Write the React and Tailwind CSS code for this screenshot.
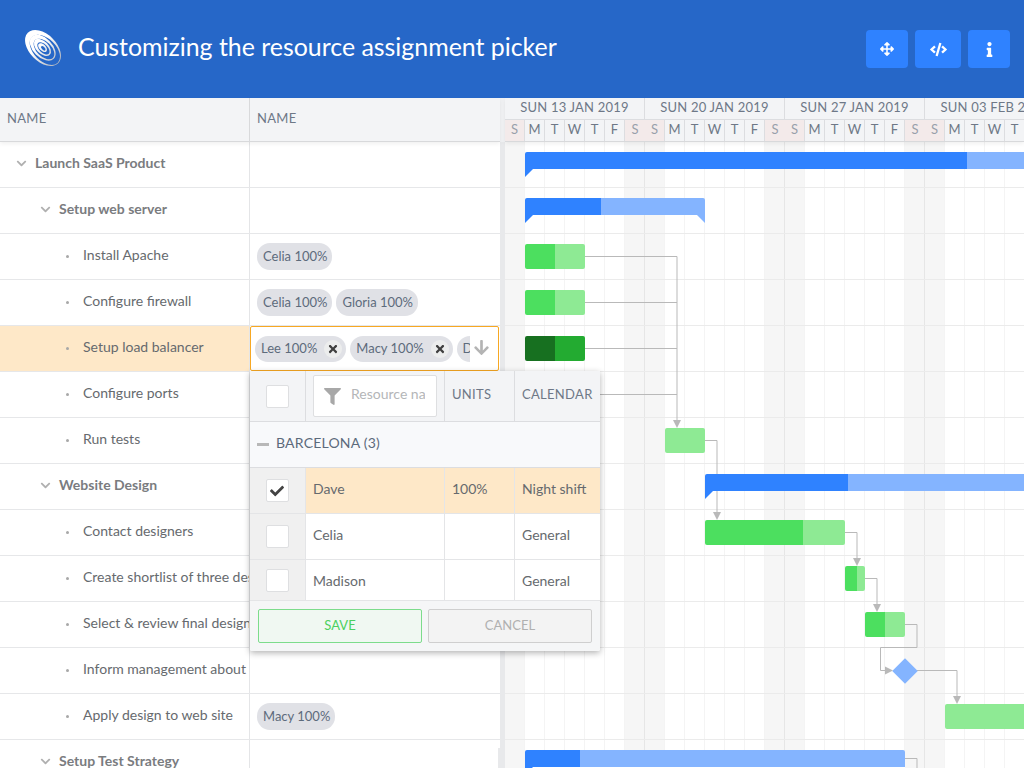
import { FaArrowsAlt, FaCode, FaInfo, FaCheck, FaTimes, FaFilter, FaArrowDown, FaChevronDown } from "react-icons/fa";

const X0 = 505;
const Y0 = 142;

const ROWS = [
  { name: "Launch SaaS Product", level: 0 },
  { name: "Setup web server", level: 1 },
  { name: "Install Apache", level: 2, tags: ["Celia 100%"] },
  { name: "Configure firewall", level: 2, tags: ["Celia 100%", "Gloria 100%"] },
  { name: "Setup load balancer", level: 2, selected: true },
  { name: "Configure ports", level: 2 },
  { name: "Run tests", level: 2 },
  { name: "Website Design", level: 1 },
  { name: "Contact designers", level: 2 },
  { name: "Create shortlist of three designers", level: 2 },
  { name: "Select & review final design", level: 2 },
  { name: "Inform management about final design", level: 2 },
  { name: "Apply design to web site", level: 2, tags: ["Macy 100%"] },
  { name: "Setup Test Strategy", level: 1 },
];

const WEEKS = ["SUN 13 JAN 2019", "SUN 20 JAN 2019", "SUN 27 JAN 2019", "SUN 03 FEB 2019"];
const DAYS = ["S", "M", "T", "W", "T", "F", "S"];

const BARS = [
  { x: 525, y: 152, w: 499, h: 17, done: 442, parent: true, open: true },
  { x: 525, y: 198, w: 180, h: 17, done: 76, parent: true },
  { x: 525, y: 244, w: 60, h: 25, done: 30 },
  { x: 525, y: 290, w: 60, h: 25, done: 30 },
  { x: 525, y: 336, w: 60, h: 25, done: 30, selected: true },
  { x: 665, y: 428, w: 40, h: 25, done: 0 },
  { x: 705, y: 474, w: 319, h: 17, done: 143, parent: true, open: true },
  { x: 705, y: 520, w: 140, h: 25, done: 98 },
  { x: 845, y: 566, w: 20, h: 25, done: 12 },
  { x: 865, y: 612, w: 40, h: 25, done: 20 },
  { x: 945, y: 704, w: 79, h: 25, done: 0, open: true },
  { x: 525, y: 750, w: 380, h: 17, done: 55, parent: true },
];

const LINES = [
  "M585 256.5H677V422",
  "M585 302.5H677",
  "M585 348.5H677",
  "M600 394.5H677",
  "M705 440.5H717V514",
  "M845 532.5H857V560",
  "M865 578.5H877V606",
  "M905 624.5H917V647.5H880.5V670.5H887",
  "M917 670.5H957V698",
  "M905 758.5H917V768",
];

const ARROWS = [
  "673,420 681,420 677,428",
  "713,512 721,512 717,520",
  "853,558 861,558 857,566",
  "873,604 881,604 877,612",
  "885,666.5 885,674.5 893,670.5",
  "953,696 961,696 957,704",
];

// outer ellipse minus a hole pushed along the long axis, gives the crescent look
const RINGS = [
  [19, 21.5, 13.5, 21.6, 18.2, 11.2],
  [18.6, 15.6, 9.6, 20.4, 12.6, 7.4],
  [18.2, 10.4, 6.2, 19.6, 7.6, 4.2],
  [18.4, 5.4, 3.2, 19.4, 2.8, 1.5],
];

function ellipsePath(cx, rx, ry) {
  return `M${cx - rx} 19a${rx} ${ry} 0 1 0 ${rx * 2} 0a${rx} ${ry} 0 1 0 ${-rx * 2} 0Z`;
}

function Logo() {
  return (
    <svg width="38" height="38" viewBox="0 0 38 38" className="shrink-0 mb-[3px]">
      <defs>
        <linearGradient id="logoFade" gradientUnits="userSpaceOnUse" x1="0" y1="19" x2="40" y2="19">
          <stop offset="0.35" stopColor="#ffffff" />
          <stop offset="1" stopColor="#b4b8c0" />
        </linearGradient>
      </defs>
      <g transform="rotate(45 19 19)" fill="url(#logoFade)" fillRule="evenodd">
        {RINGS.map((r) => (
          <path key={r[1]} d={ellipsePath(r[0], r[1], r[2]) + ellipsePath(r[3], r[4], r[5])} />
        ))}
      </g>
    </svg>
  );
}

function HeaderButton({ width, children }) {
  return (
    <div className={`${width} h-[38px] rounded-sm bg-[#2f82ff] text-white flex items-center justify-center`}>
      {children}
    </div>
  );
}

function Tag({ label, closable }) {
  return (
    <div className={`${closable ? "h-[26px] gap-[7px] pr-[4px]" : "h-[27px] pr-[5px]"} shrink-0 rounded-[13px] bg-[#e0e1e6] text-[#5d6b7c] text-[13px] flex items-center pl-[6px] whitespace-nowrap`}>
      <span>{label}</span>
      {closable && (
        <span className="w-[18px] h-[18px] rounded-full bg-[#eceded] flex items-center justify-center text-[#3f3f3f] text-[12px]">
          <FaTimes />
        </span>
      )}
    </div>
  );
}

function TreeCell({ row }) {
  if (row.level === 2) {
    return (
      <div className="w-[250px] shrink-0 h-full flex items-center pl-[66px] border-r border-[#e4e5e7] text-[#666a6e] text-[14px] overflow-hidden whitespace-nowrap">
        <span className="w-[3px] h-[3px] rounded-full bg-[#a8a8a8] shrink-0 mr-[14px]" />
        <span className="mb-[4px]">{row.name}</span>
      </div>
    );
  }
  return (
    <div className={`${row.level === 0 ? "pl-[16px]" : "pl-[40px]"} w-[250px] shrink-0 h-full flex items-center border-r border-[#e4e5e7] text-[#7a7c7f] text-[14px] font-bold overflow-hidden whitespace-nowrap`}>
      <FaChevronDown className="text-[#b0b0b0] text-[11px] shrink-0 mr-[8px] mb-[2px]" />
      <span className="mb-[4px]">{row.name}</span>
    </div>
  );
}

function GridRow({ row }) {
  return (
    <div className={`${row.selected ? "bg-[#fee8c8]" : "bg-white"} h-[46px] shrink-0 flex border-b border-[#e6e7e9]`}>
      <TreeCell row={row} />
      <div className="flex-1 flex items-center gap-[4px] pl-[7px] bg-white">
        {row.tags && row.tags.map((t) => <Tag key={t} label={t} />)}
      </div>
    </div>
  );
}

function Bar({ bar }) {
  const light = bar.parent ? "#84b4ff" : "#8eea94";
  const dark = bar.selected ? "#177020" : bar.parent ? "#2f82ff" : "#4cdf5f";
  const rest = bar.selected ? "#23ab31" : light;
  return (
    <div
      className="absolute z-10"
      style={{ left: bar.x - X0, top: bar.y - Y0, width: bar.w, height: bar.h }}
    >
      <div className={`${bar.parent ? "rounded-t-[2px]" : "rounded-[2px]"} h-full flex overflow-hidden ${bar.open ? "rounded-r-none" : ""}`}>
        <div className="h-full" style={{ width: bar.done, background: dark }} />
        <div className="h-full flex-1" style={{ background: rest }} />
      </div>
      {bar.parent && (
        <svg width="8" height="8" className="absolute left-0 top-full">
          <polygon points="0,0 8,0 0,8" fill={bar.done ? "#2f82ff" : light} />
        </svg>
      )}
      {bar.parent && !bar.open && (
        <svg width="8" height="8" className="absolute right-0 top-full">
          <polygon points="0,0 8,0 8,8" fill={light} />
        </svg>
      )}
    </div>
  );
}

function Calendar() {
  return (
    <div className="h-[44px] shrink-0 flex overflow-hidden border-b border-[#d8d9db] bg-[#f3f4f6] relative z-20 shadow-[0_2px_4px_rgba(0,0,0,0.06)]">
      {WEEKS.map((w) => (
        <div key={w} className="w-[140px] shrink-0 border-r border-[#dcdde0]">
          <div className="h-[22px] pb-[2px] text-[13px] text-[#6e7887] flex items-center justify-center tracking-[0.2px] whitespace-nowrap overflow-hidden border-b border-[#dcdde0]">
            {w}
          </div>
          <div className="h-[21px] flex">
            {DAYS.map((d, i) => (
              <div
                key={i}
                className={`${d === "S" ? "bg-[#f3eaea] text-[#98a0aa]" : "text-[#6e7887]"} w-[20px] shrink-0 pb-[2px] text-[13px] flex items-center justify-center border-r border-[#dcdde0] last:border-r-0`}
              >
                {d}
              </div>
            ))}
          </div>
        </div>
      ))}
    </div>
  );
}

function GanttBody() {
  const weeks = [0, 1, 2, 3];
  return (
    <div className="relative flex-1 overflow-hidden bg-white">
      <div className="absolute inset-0 flex">
        {weeks.map((w) => (
          <div key={w} className="w-[140px] shrink-0 h-full flex">
            {DAYS.map((d, i) => (
              <div
                key={i}
                className={`${d === "S" ? "bg-[#f6f6f6]" : ""} ${i === 6 ? "border-r border-[#e6e6e6]" : "border-r border-[#f4f4f4]"} w-[20px] h-full shrink-0`}
              />
            ))}
          </div>
        ))}
      </div>
      <div className="absolute inset-0">
        {ROWS.map((r) => (
          <div key={r.name} className="h-[46px] border-b border-[#ebebeb]" />
        ))}
      </div>
      <svg className="absolute left-0 top-0" width="519" height="626" viewBox="505 142 519 626" fill="none">
        {LINES.map((d) => (
          <path key={d} d={d} stroke="#b9b9b9" strokeWidth="1" />
        ))}
        {ARROWS.map((p) => (
          <polygon key={p} points={p} fill="#b9b9b9" />
        ))}
      </svg>
      {BARS.map((b, i) => (
        <Bar key={i} bar={b} />
      ))}
      <div className="absolute z-10 w-[18px] h-[18px] bg-[#84b4ff] rotate-45" style={{ left: 905 - X0 - 9, top: 671 - Y0 - 9 }} />
      <div className="absolute z-10 left-[28px] top-[625px] w-[372px] h-[1px] bg-white" />
    </div>
  );
}

function Check({ checked }) {
  return (
    <div className="w-[23px] h-[23px] bg-white border border-[#dedfe1] rounded-[2px] flex items-center justify-center text-[#444] text-[14px]">
      {checked && <FaCheck />}
    </div>
  );
}

function PickerRow({ name, units, calendar, checked, height, textPad }) {
  const bg = checked ? "bg-[#fee8c8]" : "bg-white";
  return (
    <div className={`${height} shrink-0 flex text-[14px] text-[#666a6e] border-b border-[#e4e5e7] last:border-b-0`}>
      <div className="w-[56px] shrink-0 bg-[#f0f0f0] border-r border-[#e4e5e7] flex items-center justify-center pr-[1px]">
        <Check checked={checked} />
      </div>
      <div className={`${bg} ${textPad} w-[139px] shrink-0 border-r border-[#e4e5e7] pl-[7px] flex items-center`}>{name}</div>
      <div className={`${bg} ${textPad} w-[70px] shrink-0 border-r border-[#e4e5e7] pl-[7px] flex items-center`}>{units}</div>
      <div className={`${bg} ${textPad} flex-1 pl-[7px] flex items-center`}>{calendar}</div>
    </div>
  );
}

function LoadEditor() {
  return (
    <div className="absolute left-[250px] top-[228px] w-[249px] h-[45px] z-30 bg-white border border-[#f7a823] rounded-[2px] flex items-center pl-[4px]">
      <div className="w-[215px] shrink-0 flex gap-[4px] overflow-hidden">
        <Tag label="Lee 100%" closable />
        <Tag label="Macy 100%" closable />
        <Tag label="Dave 100%" closable />
      </div>
      <FaArrowDown className="text-[#b4b4b4] text-[17px] ml-[3px] mb-[3px]" />
    </div>
  );
}

function Picker() {
  return (
    <div className="absolute left-[250px] top-[273px] w-[350px] h-[280px] z-40 bg-white shadow-[0_2px_6px_rgba(0,0,0,0.3)] rounded-b-[2px] flex flex-col overflow-hidden">
      <div className="h-[51px] shrink-0 flex bg-[#f3f4f6] border-b border-[#dcdde0] text-[13px] text-[#6e7887] tracking-[0.3px]">
        <div className="w-[56px] shrink-0 border-r border-[#dcdde0] flex items-center justify-center pr-[1px]">
          <Check />
        </div>
        <div className="w-[139px] shrink-0 border-r border-[#dcdde0] pl-[7px] pr-[7px] flex items-center">
          <div className="w-[124px] h-[42px] bg-white border border-[#dedfe1] rounded-[2px] flex items-center pl-[10px] overflow-hidden whitespace-nowrap tracking-normal">
            <FaFilter className="text-[#a8a8a8] text-[17px] shrink-0 mr-[10px]" />
            <span className="text-[#b4b6b8] text-[14px] w-[74px] overflow-hidden mb-[5px]">Resource name</span>
          </div>
        </div>
        <div className="w-[70px] shrink-0 border-r border-[#dcdde0] pl-[7px] pb-[2px] flex items-center">UNITS</div>
        <div className="flex-1 pl-[7px] pb-[2px] flex items-center">CALENDAR</div>
      </div>
      <div className="h-[46px] shrink-0 bg-[#f8f9fb] border-b border-[#dcdde0] flex items-center pl-[7px] text-[14px] text-[#5c6a7b] tracking-[0.2px]">
        <span className="w-[12px] h-[3px] bg-[#b8b8b8] mr-[7px]" />
        <span className="mb-[4px]">BARCELONA (3)</span>
      </div>
      <PickerRow name="Dave" units="100%" calendar="Night shift" checked height="h-[46px]" textPad="pb-[4px]" />
      <PickerRow name="Celia" calendar="General" height="h-[46px]" textPad="pb-[4px]" />
      <PickerRow name="Madison" calendar="General" height="h-[41px]" textPad="" />
      <div className="flex-1 bg-[#f5f6f7] flex gap-[6px] pl-[8px] pr-[8px] pt-[8px] text-[13px]">
        <div className="w-[164px] h-[34px] bg-[#f0f8f2] border border-[#7ddc8c] rounded-[2px] text-[#4cd05f] flex items-center justify-center">SAVE</div>
        <div className="w-[164px] h-[34px] bg-[#f3f3f3] border border-[#cfcfcf] rounded-[2px] text-[#b0b0b0] flex items-center justify-center">CANCEL</div>
      </div>
    </div>
  );
}

export default function App() {
  return (
    <div className="w-[1024px] h-[768px] overflow-hidden flex flex-col bg-white font-['Lato',sans-serif]">
      <header className="h-[98px] shrink-0 bg-[#2667c8] flex items-center pl-[24px] pr-[14px]">
        <Logo />
        <h1 className="ml-[16px] mb-[4px] text-[24.9px] font-normal text-white whitespace-nowrap">
          Customizing the resource assignment picker
        </h1>
        <div className="ml-auto flex gap-[7px]">
          <HeaderButton width="w-[42px]"><FaArrowsAlt className="text-[14px]" /></HeaderButton>
          <HeaderButton width="w-[46px]"><FaCode className="text-[17px]" /></HeaderButton>
          <HeaderButton width="w-[42px]"><FaInfo className="text-[15px]" /></HeaderButton>
        </div>
      </header>

      <div className="flex-1 flex min-h-0">
        <div className="relative w-[500px] shrink-0 flex flex-col">
          <div className="h-[44px] shrink-0 flex bg-[#f3f4f6] border-b border-[#d8d9db] text-[13px] text-[#6e7887] tracking-[0.3px] shadow-[0_2px_4px_rgba(0,0,0,0.06)] relative z-20">
            <div className="w-[250px] shrink-0 pl-[7px] pb-[2px] flex items-center border-r border-[#d8d9db]">NAME</div>
            <div className="flex-1 pl-[7px] pb-[2px] flex items-center">NAME</div>
          </div>
          {ROWS.map((r) => (
            <GridRow key={r.name} row={r} />
          ))}
          <LoadEditor />
          <Picker />
        </div>

        <div className="relative w-[5px] shrink-0 bg-[#e8e9eb] flex flex-col">
          <div className="h-[44px] shrink-0 bg-[#f0f1f3]" />
          <div className="absolute left-[-2px] top-[650px] w-[7px] h-[20px] bg-[#e8e9eb]" />
        </div>

        <div className="flex-1 min-w-0 flex flex-col">
          <Calendar />
          <GanttBody />
        </div>
      </div>
    </div>
  );
}
